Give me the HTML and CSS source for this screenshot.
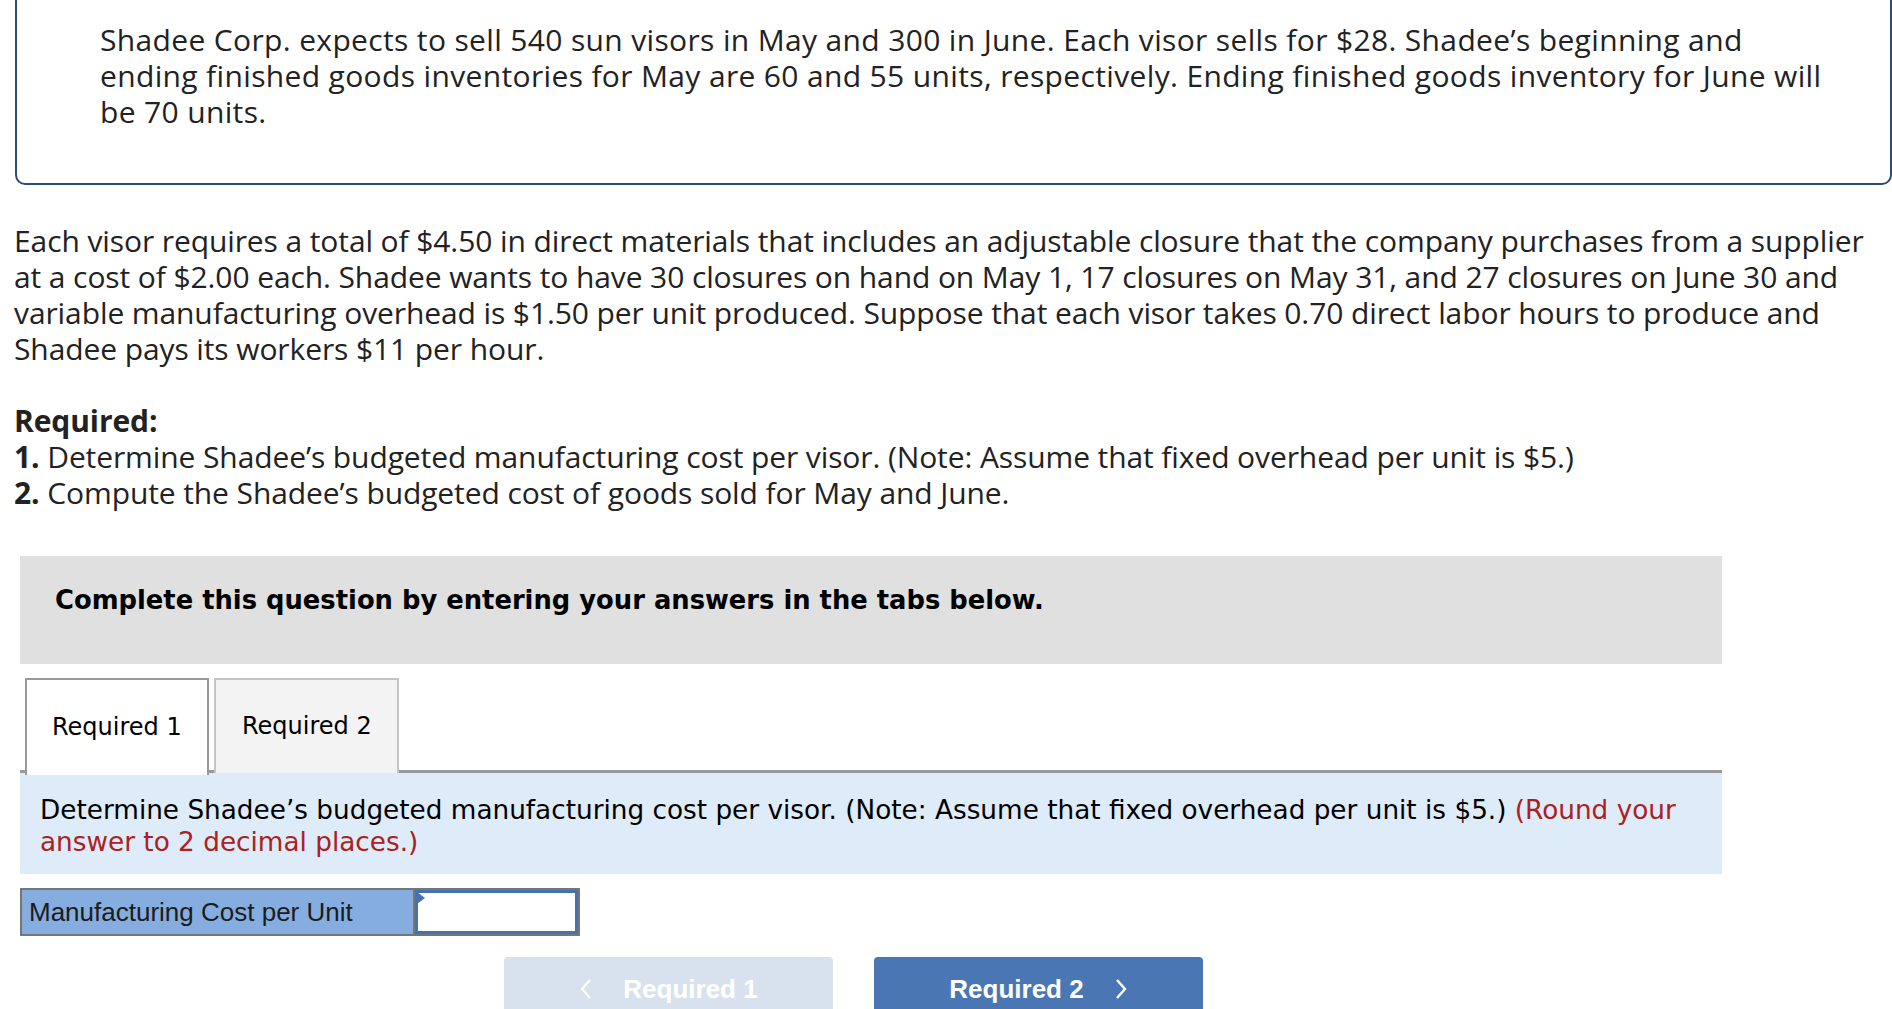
FILE: index.html
```html
<!DOCTYPE html>
<html lang="en">
<head>
<meta charset="utf-8">
<title>Shadee Corp.</title>
<link rel="stylesheet" href="styles.css">
</head>
<body>
<div class="page">
  <div class="intro-box">
    <p>Shadee Corp. expects to sell 540 sun visors in May and 300 in June. Each visor sells for $28. Shadee’s beginning and ending finished goods inventories for May are 60 and 55 units, respectively. Ending finished goods inventory for June will be 70 units.</p>
  </div>
  <div class="problem">
    <p>Each visor requires a total of $4.50 in direct materials that includes an adjustable closure that the company purchases from a supplier at a cost of $2.00 each. Shadee wants to have 30 closures on hand on May 1, 17 closures on May 31, and 27 closures on June 30 and variable manufacturing overhead is $1.50 per unit produced. Suppose that each visor takes 0.70 direct labor hours to produce and Shadee pays its workers $11 per hour.</p>
    <p class="req"><strong>Required:</strong><br><strong>1.</strong> Determine Shadee’s budgeted manufacturing cost per visor. (Note: Assume that fixed overhead per unit is $5.)<br><strong>2.</strong> Compute the Shadee’s budgeted cost of goods sold for May and June.</p>
  </div>
  <div class="assign">
    <div class="banner">Complete this question by entering your answers in the tabs below.</div>
    <div class="tabs">
      <div class="tab active">Required 1</div>
      <div class="tab">Required 2</div>
    </div>
    <div class="instr">Determine Shadee’s budgeted manufacturing cost per visor. (Note: Assume that fixed overhead per unit is $5.) <span class="red">(Round your answer to 2 decimal places.)</span></div>
    <div class="answer-row">
      <div class="label">Manufacturing Cost per Unit</div>
      <div class="input"><span class="marker"></span></div>
    </div>
    <div class="nav">
      <div class="btn prev">
        <svg class="chev" width="14" height="22" viewBox="0 0 14 22"><path d="M11 2 L3 11 L11 20" fill="none" stroke="#fff" stroke-width="2"/></svg>
        <span>Required 1</span>
      </div>
      <div class="btn next">
        <span>Required 2</span>
        <svg class="chev" width="14" height="22" viewBox="0 0 14 22"><path d="M3 2 L11 11 L3 20" fill="none" stroke="#fff" stroke-width="2.4"/></svg>
      </div>
    </div>
  </div>
</div>
</body>
</html>
```
FILE: styles.css
```css
html, body {
  margin: 0;
  padding: 0;
  background: #fff;
}
body {
  overflow: hidden;
}
.page {
  padding: 0 0 0 14px;
  font-family: "Open Sans", Lato, sans-serif;
  color: #222;
  font-size: 30px;
  line-height: 36px;
}
p {
  margin: 0;
}
.intro-box {
  margin-left: 1px;
  border: 2px solid #2c4a7e;
  border-top: none;
  border-radius: 0 0 10px 10px;
  padding: 22px 68px 53px 83px;
  letter-spacing: 0.35px;
}
.problem {
  letter-spacing: -0.1px;
  padding-right: 10px;
}
.problem p {
  margin-top: 38px;
}
.problem p.req {
  margin-top: 36px;
  letter-spacing: -0.1px;
}
.problem strong {
  font-weight: 700;
}
.assign {
  margin-left: 6px;
  width: 1702px;
  font-family: Verdana, "DejaVu Sans", sans-serif;
  color: #000;
  letter-spacing: 0;
}
.banner {
  margin-top: 45px;
  height: 108px;
  box-sizing: border-box;
  background: #e0e0e0;
  padding: 29px 0 0 35px;
  font-weight: 700;
  font-size: 25.8px;
  line-height: 30px;
}
.tabs {
  margin-top: 14px;
  display: flex;
  gap: 5px;
  padding-left: 5px;
  border-bottom: 3px solid #999;
  height: 92px;
}
.tab {
  box-sizing: border-box;
  width: 185px;
  height: 95px;
  border: 2px solid #c4c4c4;
  border-bottom: none;
  background: #f3f3f3;
  display: flex;
  align-items: center;
  padding-left: 26px;
  font-size: 24px;
  line-height: 28px;
  padding-bottom: 2px;
}
.tab.active {
  width: 184px;
  background: #fff;
  border-color: #999;
  height: 97px;
  position: relative;
  z-index: 1;
  padding-left: 25px;
}
.instr {
  background: #deebf8;
  padding: 21px 20px 16px 20px;
  font-size: 26.3px;
  line-height: 32px;
}
.red {
  color: #ab2020;
}
.answer-row {
  margin-top: 14px;
  display: flex;
  width: 560px;
  height: 48px;
  box-sizing: border-box;
  border: 2px solid #767676;
  background: #767676;
}
.label {
  box-sizing: border-box;
  width: 391px;
  background: #85addf;
  display: flex;
  align-items: center;
  padding-left: 7px;
  font-family: "Liberation Sans", Arial, sans-serif;
  font-size: 26px;
  color: #1c1c1c;
  margin-right: 2px;
}
.input {
  flex: 1;
  background: #fff;
  border: 3px solid #4672b3;
  position: relative;
}
.marker {
  position: absolute;
  left: -1px;
  top: -1px;
  width: 0;
  height: 0;
  border-top: 6px solid transparent;
  border-bottom: 6px solid transparent;
  border-left: 8px solid #4672b3;
}
.nav {
  margin-top: 21px;
  padding-left: 484px;
  display: flex;
  gap: 41px;
}
.btn {
  width: 329px;
  height: 64px;
  border-radius: 4px 4px 0 0;
  display: flex;
  align-items: center;
  justify-content: center;
  gap: 30px;
  color: #fff;
  font-family: "Liberation Sans", Arial, sans-serif;
  font-weight: 700;
  font-size: 26px;
}
.btn.prev {
  background: #d8e2ee;
}
.btn.next {
  background: #4a76b4;
}
.chev {
  display: block;
}
```
